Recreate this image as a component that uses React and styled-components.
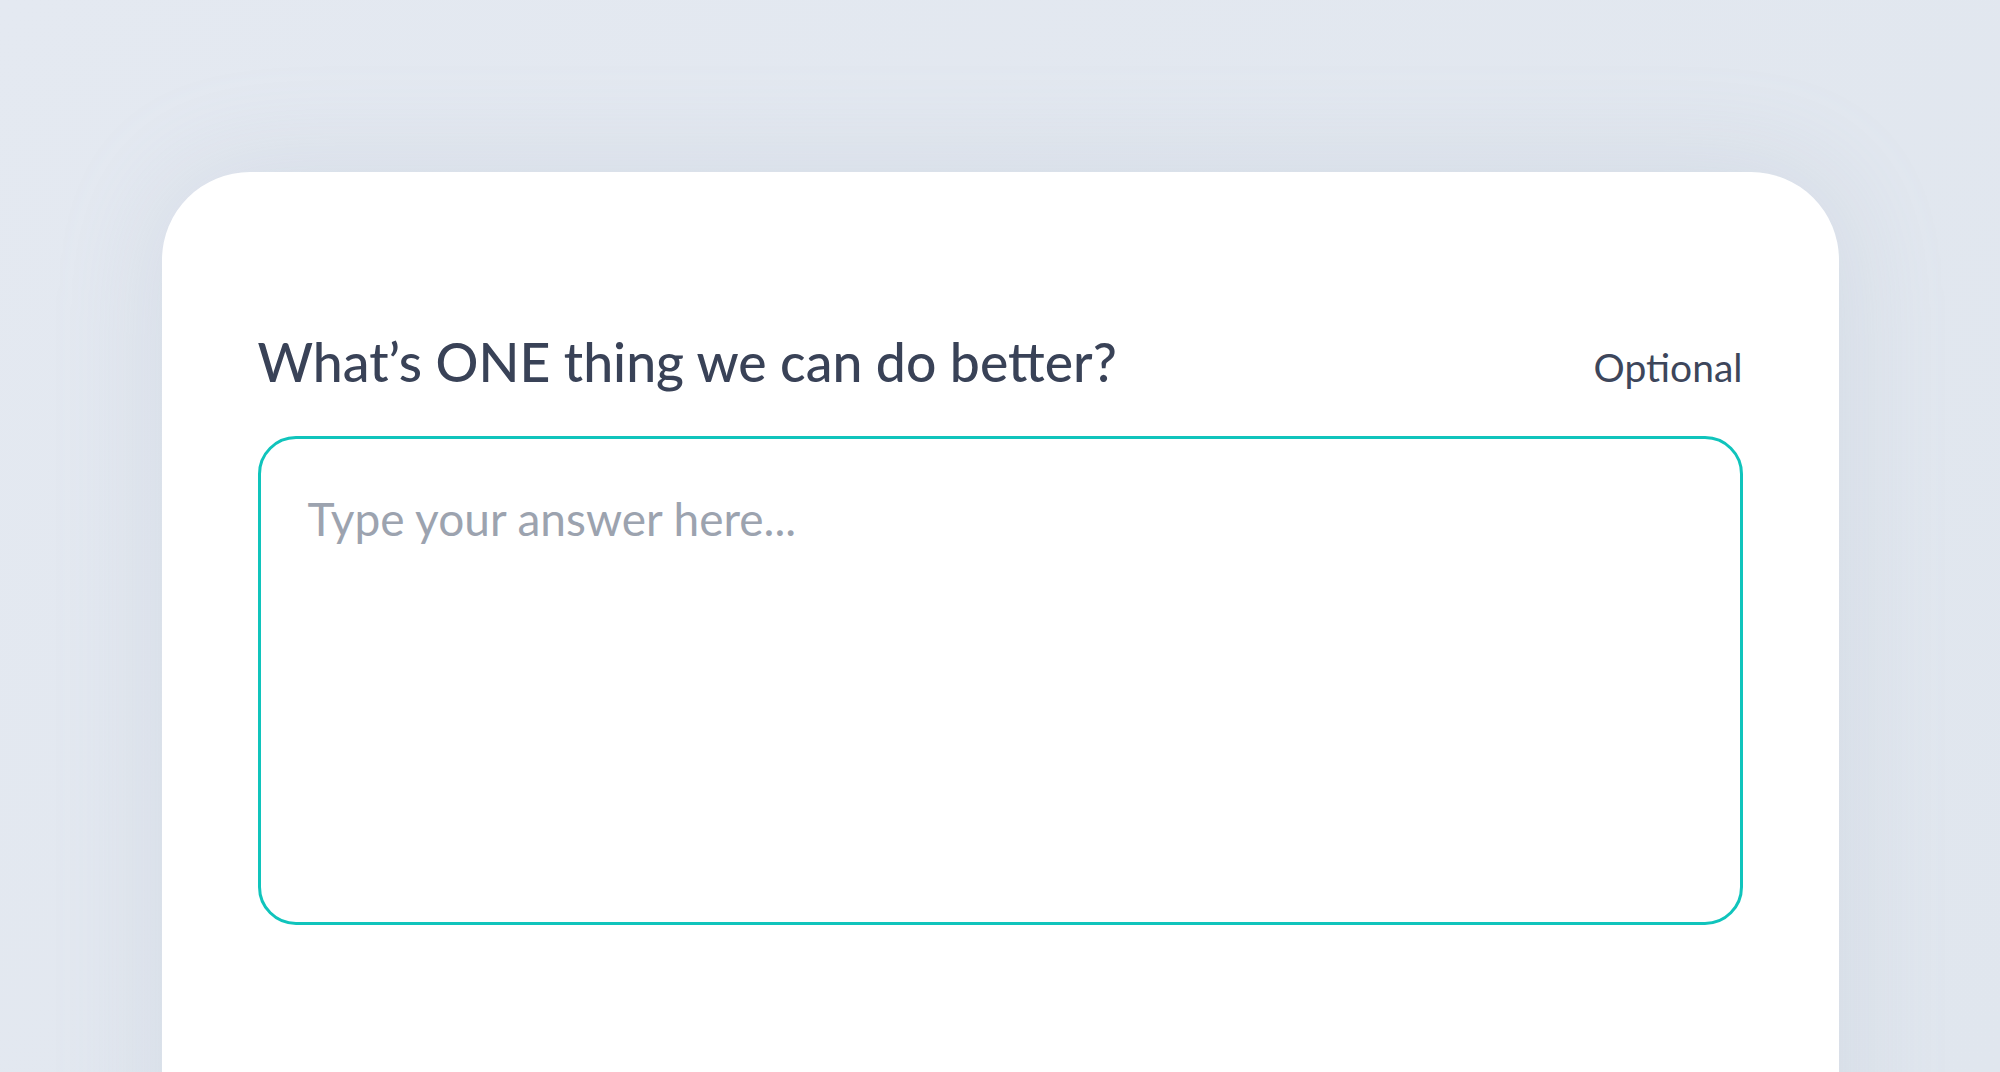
import styled, { createGlobalStyle } from "styled-components"

const GlobalStyle = createGlobalStyle`
  html, body {
    margin: 0;
    padding: 0;
    background: #e2e8f0;
    overflow: hidden;
  }
  body {
    font-family: "Lato", "Noto Sans", sans-serif;
  }
`

const Page = styled.div`
  width: 100vw;
  height: 100vh;
  padding-top: 172px;
  box-sizing: border-box;
  background: linear-gradient(135deg, #e4e9f1 0%, #e0e6ee 100%);
`

const Card = styled.div`
  width: 1677px;
  height: 1100px;
  margin: 0 auto;
  box-sizing: border-box;
  padding: 163px 96px 96px;
  background: #ffffff;
  border-radius: 88px 88px 0 0;
  box-shadow: 0 0 110px rgba(148, 163, 184, 0.2);
`

const Header = styled.div`
  display: flex;
  justify-content: space-between;
  align-items: baseline;
  margin-bottom: 47px;
`

const Question = styled.h2`
  margin: 0;
  font-size: 53.5px;
  line-height: 1;
  font-weight: 500;
  color: #394257;
`

const Optional = styled.span`
  font-size: 39px;
  line-height: 1;
  font-weight: 400;
  color: #3d465b;
`

const Answer = styled.textarea`
  display: block;
  width: 100%;
  height: 489px;
  box-sizing: border-box;
  border: 3px solid #10c4bc;
  border-radius: 38px;
  padding: 52px 47px;
  resize: none;
  outline: none;
  font-family: "Lato", "Noto Sans", sans-serif;
  font-size: 46px;
  color: #394257;

  &::placeholder {
    color: #9ca3af;
    opacity: 1;
  }
`

const App = () => {
  return (
    <>
      <GlobalStyle />
      <Page>
        <Card>
          <Header>
            <Question>What’s ONE thing we can do better?</Question>
            <Optional>Optional</Optional>
          </Header>
          <Answer placeholder="Type your answer here..." />
        </Card>
      </Page>
    </>
  )
}

export default App
